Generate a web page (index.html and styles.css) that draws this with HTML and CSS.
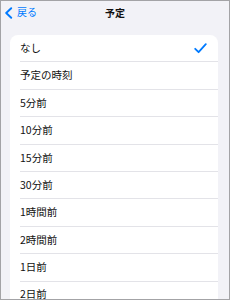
FILE: index.html
```html
<!DOCTYPE html>
<html lang="ja">
<head>
<meta charset="utf-8">
<link rel="stylesheet" href="styles.css">
</head>
<body>
<div class="frame">
  <header class="nav">
    <div class="back">
      <svg class="chev" width="9" height="12" viewBox="0 0 9 12"><path d="M7.2 1.2 L2.2 6 L7.2 10.8" fill="none" stroke="#007aff" stroke-width="1.9" stroke-linecap="round" stroke-linejoin="round"/></svg>
      <span class="back-label">戻る</span>
    </div>
    <div class="title">予定</div>
    <div class="spacer"></div>
  </header>
  <ul class="card">
    <li class="row"><div class="inner"><span>なし</span><svg class="check" width="13" height="11" viewBox="0 0 13 11"><path d="M1.2 5.8 L4.6 9.2 L11.8 1.2" fill="none" stroke="#007aff" stroke-width="1.8" stroke-linecap="round" stroke-linejoin="round"/></svg></div></li>
    <li class="row"><div class="inner"><span>予定の時刻</span></div></li>
    <li class="row"><div class="inner"><span>5分前</span></div></li>
    <li class="row"><div class="inner"><span>10分前</span></div></li>
    <li class="row"><div class="inner"><span>15分前</span></div></li>
    <li class="row"><div class="inner"><span>30分前</span></div></li>
    <li class="row"><div class="inner"><span>1時間前</span></div></li>
    <li class="row"><div class="inner"><span>2時間前</span></div></li>
    <li class="row"><div class="inner"><span>1日前</span></div></li>
    <li class="row"><div class="inner"><span>2日前</span></div></li>
    <li class="row"><div class="inner"><span>1週間前</span></div></li>
  </ul>
</div>
</body>
</html>
```
FILE: styles.css
```css
html, body {
  margin: 0;
  padding: 0;
}
body {
  font-family: "Noto Sans CJK JP", "Noto Sans", sans-serif;
  color: #111;
}
.frame {
  box-sizing: border-box;
  width: 230px;
  height: 300px;
  border: 1px solid #a3a3a6;
  background: #f2f2f7;
  overflow: hidden;
}
.nav {
  display: grid;
  grid-template-columns: 1fr auto 1fr;
  align-items: center;
  height: 23px;
}
.back {
  display: flex;
  align-items: center;
  padding-left: 3px;
  gap: 4px;
  color: #007aff;
  font-size: 10px;
  line-height: 1;
}
.chev {
  display: block;
}
.back-label {
  position: relative;
  top: -0.5px;
}
.title {
  font-weight: 700;
  font-size: 10px;
  line-height: 1;
  color: #111;
}
.card {
  list-style: none;
  margin: 11px 11px 0 9px;
  padding: 0;
  background: #fff;
  border-radius: 8px;
  overflow: hidden;
}
.row {
  padding-left: 10px;
}
.inner {
  display: flex;
  align-items: center;
  justify-content: space-between;
  height: 26.4px;
  border-bottom: 1px solid #e3e3e8;
  padding-right: 11px;
  font-size: 10.5px;
  line-height: 1;
}
.check {
  display: block;
}
```
